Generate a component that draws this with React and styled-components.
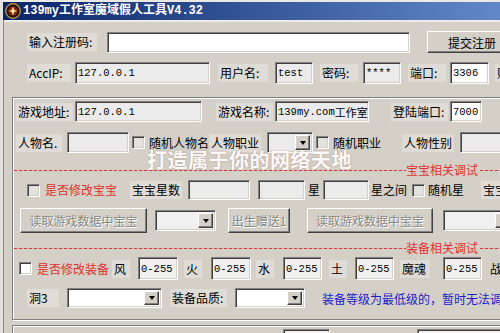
import React from 'react';
import styled, { createGlobalStyle, css } from 'styled-components';

const GlobalStyle = createGlobalStyle`
  html, body {
    margin: 0;
    padding: 0;
  }
  body {
    background: #d4d0c8;
    font-family: "Noto Sans CJK SC", "Liberation Sans", sans-serif;
    font-size: 12px;
  }
`;

// shared placing in a row: gap before the part and its width
const place = css`
  flex-shrink: 0;
  margin-left: ${(p) => p.$ml || 0}px;
  ${(p) => (p.$w ? `width: ${p.$w}px;` : '')}
`;

const sunken = css`
  border: 1px solid;
  border-color: #808080 #ffffff #ffffff #808080;
  box-shadow: inset 1px 1px 0 #404040, inset -1px -1px 0 #d4d0c8;
`;

const raised = css`
  border: 1px solid;
  border-color: #ffffff #404040 #404040 #ffffff;
  box-shadow: inset -1px -1px 0 #808080, inset 1px 1px 0 #d4d0c8;
`;

const Screen = styled.div`
  position: relative;
  width: 500px;
  height: 333px;
  overflow: hidden;
  background: #d4d0c8;
`;

const Window = styled.div`
  width: 620px;
  height: 333px;
  box-sizing: border-box;
  border-top: 2px solid #ece9e4;
  border-left: 3px solid #e4e1dc;
`;

const TitleBar = styled.div`
  height: 18px;
  display: flex;
  align-items: center;
  gap: 2px;
  padding-left: 2px;
  background: linear-gradient(90deg, #0a246a 0px, #6088c8 497px, #a6caf0 617px);
`;

const Title = styled.span`
  color: #fff;
  font: bold 12px/18px "Liberation Mono", "Noto Sans CJK SC", monospace;
  white-space: nowrap;
`;

const Client = styled.div`
  height: 313px;
  border-left: 1px solid #8c8983;
  box-shadow: inset 0 2px 0 #eeece8;
  padding-top: 11px;
  box-sizing: border-box;
`;

const Row = styled.div`
  display: flex;
  align-items: center;
  height: ${(p) => p.$h}px;
  margin-top: ${(p) => p.$mt || 0}px;
`;

const Label = styled.span`
  ${place}
  box-sizing: border-box;
  height: 18px;
  line-height: 18px;
  padding: 0 2px;
  white-space: nowrap;
  color: ${(p) => p.$color || '#000'};
  background: ${(p) => (p.$plain ? 'transparent' : '#dfdcd7')};
`;

const Field = styled.div`
  ${place}
  ${sunken}
  box-sizing: border-box;
  height: ${(p) => p.$h || 21}px;
  display: flex;
  align-items: center;
  padding-left: 2px;
  background: ${(p) => p.$bg || '#ebebeb'};
  font: 10.5px "Liberation Mono", "Noto Sans CJK SC", monospace;
  color: #000;
  white-space: nowrap;
  overflow: hidden;
`;

const Wide = styled.span`
  font-size: 11px;
  font-family: "Noto Sans CJK SC", sans-serif;
`;

const SelectBox = styled(Field)`
  justify-content: flex-end;
  padding: 2px;
`;

const DropButton = styled.span`
  ${raised}
  width: 15px;
  height: 100%;
  box-sizing: border-box;
  background: #d4d0c8;
  display: flex;
  align-items: center;
  justify-content: center;
  &::after {
    content: '';
    border-left: 3.5px solid transparent;
    border-right: 3.5px solid transparent;
    border-top: 4px solid #000;
  }
`;

const Check = styled.span`
  ${place}
  ${sunken}
  width: 13px;
  height: 13px;
  box-sizing: border-box;
  background: ${(p) => p.$bg || '#fff'};
`;

const Button = styled.div`
  ${place}
  ${raised}
  height: ${(p) => p.$h}px;
  box-sizing: border-box;
  display: flex;
  align-items: center;
  justify-content: center;
  background: #d4d0c8;
  white-space: nowrap;
  color: ${(p) => (p.$disabled ? '#8a877f' : '#000')};
  text-shadow: ${(p) => (p.$disabled ? '1px 1px 0 #fff' : 'none')};
`;

const GroupBox = styled.div`
  width: 600px;
  margin-left: 8px;
  margin-top: ${(p) => p.$mt}px;
  padding: 0 0 ${(p) => p.$pb}px 1px;
  border: 1px solid #808080;
  box-shadow: inset 1px 1px 0 #fff, 1px 1px 0 #fff;
`;

const Divider = styled.div`
  display: flex;
  align-items: center;
  height: 12px;
  margin-top: ${(p) => p.$mt}px;
`;

const Dash = styled.span`
  height: 1px;
  ${(p) => (p.$w ? `width: ${p.$w}px; flex-shrink: 0;` : 'flex: 1;')}
  background: repeating-linear-gradient(90deg, #cf3a3a 0 3px, #e6aaa8 3px 5px);
`;

const DividerLabel = styled.span`
  width: 74px;
  flex-shrink: 0;
  line-height: 12px;
  color: #e0302e;
  white-space: nowrap;
`;

const Note = styled.span`
  ${place}
  color: #1c1cc8;
  white-space: nowrap;
`;

const Watermark = styled.div`
  position: absolute;
  left: 147px;
  top: 150px;
  font: bold 20px/20px "Noto Sans CJK SC", sans-serif;
  letter-spacing: 0.5px;
  color: rgba(255, 255, 255, 0.95);
  text-shadow: 0 0 2px rgba(140, 70, 70, 0.45);
  white-space: nowrap;
  pointer-events: none;
`;

const AppIcon = () => (
  <svg width="16" height="16" viewBox="0 0 16 16">
    <circle cx="8" cy="8" r="7.3" fill="#2a1206" stroke="#c9a24a" strokeWidth="1.2" />
    <circle cx="8" cy="8" r="4.6" fill="#8c2412" />
    <path d="M8 3.6 L9.4 7 L12.4 8 L9.4 9 L8 12.4 L6.6 9 L3.6 8 L6.6 7 Z" fill="#f0d27a" />
    <circle cx="8" cy="8" r="1.2" fill="#fff6d8" />
  </svg>
);

const Select = ({ ml, w, h, bg }) => (
  <SelectBox $ml={ml} $w={w} $h={h} $bg={bg}>
    <DropButton />
  </SelectBox>
);

const App = () => {
  return (
    <Screen>
      <GlobalStyle />
      <Window>
        <TitleBar>
          <AppIcon />
          <Title>139my工作室魔域假人工具V4.32</Title>
        </TitleBar>
        <Client>
          <Row $h={22}>
            <Label $ml={23} $w={70}>输入注册码:</Label>
            <Field $ml={10} $w={303} $bg="#fff" />
            <Button $ml={17} $w={90} $h={22}>提交注册</Button>
          </Row>
          <Row $mt={9} $h={22}>
            <Label $ml={23} $w={44}>AccIP:</Label>
            <Field $ml={4} $w={135} $h={22}>127.0.0.1</Field>
            <Label $ml={8} $w={50}>用户名:</Label>
            <Field $ml={7} $w={38} $h={22}>test</Field>
            <Label $ml={7} $w={38}>密码:</Label>
            <Field $ml={5} $w={38} $h={22}>****</Field>
            <Label $ml={7} $w={38}>端口:</Label>
            <Field $ml={4} $w={39} $h={22} $bg="#fff">3306</Field>
            <Label $ml={6}>账号:</Label>
          </Row>

          <GroupBox $mt={13} $pb={11}>
            <Row $mt={3} $h={21}>
              <Label $ml={2} $w={57}>游戏地址:</Label>
              <Field $ml={2} $w={127}>127.0.0.1</Field>
              <Label $ml={14} $w={57}>游戏名称:</Label>
              <Field $ml={2} $w={94}>139my.com<Wide>工作室</Wide></Field>
              <Label $ml={22} $w={57}>登陆端口:</Label>
              <Field $ml={2} $w={32} $bg="#fff">7000</Field>
            </Row>
            <Row $mt={10} $h={21}>
              <Label $ml={2} $w={46}>人物名.</Label>
              <Field $ml={5} $w={62} />
              <Check $ml={3} $bg="#e4e2de" />
              <Label $ml={2} $w={62} $plain>随机人物名</Label>
              <Label $w={52}>人物职业</Label>
              <Select ml={6} w={46} />
              <Check $ml={3} $bg="#e4e2de" />
              <Label $ml={2} $w={52} $plain>随机职业</Label>
              <Label $ml={19} $w={52}>人物性别</Label>
              <Select ml={6} w={60} />
            </Row>

            <Divider $mt={11}>
              <Dash $w={392} />
              <DividerLabel>宝宝相关调试</DividerLabel>
              <Dash />
            </Divider>

            <Row $mt={4} $h={20}>
              <Check $ml={13} $bg="#e4e2de" />
              <Label $ml={3} $w={74} $plain $color="#e0302e">是否修改宝宝</Label>
              <Label $ml={13} $w={52}>宝宝星数</Label>
              <Field $ml={6} $w={62} $h={20} />
              <Field $ml={8} $w={47} $h={20} />
              <Label $ml={1} $w={17} $plain>星</Label>
              <Field $w={46} $h={20} />
              <Label $w={40} $plain>星之间</Label>
              <Check $ml={3} $bg="#e4e2de" />
              <Label $ml={1} $w={40} $plain>随机星</Label>
              <Label $ml={15} $w={30}>宝宝</Label>
            </Row>
            <Row $mt={8} $h={25}>
              <Button $ml={6} $w={127} $h={25} $disabled>读取游戏数据中宝宝</Button>
              <Select ml={8} w={61} bg="#f0f0f0" />
              <Button $ml={12} $w={62} $h={25} $disabled>出生赠送1</Button>
              <Button $ml={17} $w={126} $h={25} $disabled>读取游戏数据中宝宝</Button>
              <Select ml={10} w={70} bg="#f0f0f0" />
            </Row>

            <Divider $mt={9}>
              <Dash $w={392} />
              <DividerLabel>装备相关调试</DividerLabel>
              <Dash />
            </Divider>

            <Row $mt={3} $h={23}>
              <Check $ml={5} />
              <Label $ml={3} $w={74} $plain $color="#e0302e">是否修改装备</Label>
              <Label $ml={3} $w={18}>风</Label>
              <Field $ml={8} $w={40} $h={23} $bg="#f0f0f0">0-255</Field>
              <Label $ml={6} $w={18}>火</Label>
              <Field $ml={9} $w={40} $h={23} $bg="#f0f0f0">0-255</Field>
              <Label $ml={5} $w={18}>水</Label>
              <Field $ml={9} $w={39} $h={23} $bg="#f0f0f0">0-255</Field>
              <Label $ml={7} $w={18}>土</Label>
              <Field $ml={8} $w={39} $h={23} $bg="#f0f0f0">0-255</Field>
              <Label $ml={6} $w={30}>魔魂</Label>
              <Field $ml={13} $w={39} $h={23} $bg="#f0f0f0">0-255</Field>
              <Label $ml={6} $w={20} $plain>战</Label>
            </Row>
            <Row $mt={8} $h={20}>
              <Label $ml={13} $w={32}>洞3</Label>
              <Select ml={8} w={95} h={20} bg="#fff" />
              <Label $ml={8} $w={57}>装备品质:</Label>
              <Select ml={8} w={70} h={20} bg="#fff" />
              <Note $ml={17}>装备等级为最低级的，暂时无法调整</Note>
            </Row>
          </GroupBox>

          <GroupBox $mt={5} $pb={4}>
            <Row $mt={3} $h={20}>
              <Field $ml={269} $w={47} $h={20} $bg="#f0f0f0" />
              <Field $ml={87} $w={90} $h={20} $bg="#f0f0f0" />
            </Row>
          </GroupBox>
        </Client>
      </Window>
      <Watermark>打造属于你的网络天地</Watermark>
    </Screen>
  );
};

export default App;
